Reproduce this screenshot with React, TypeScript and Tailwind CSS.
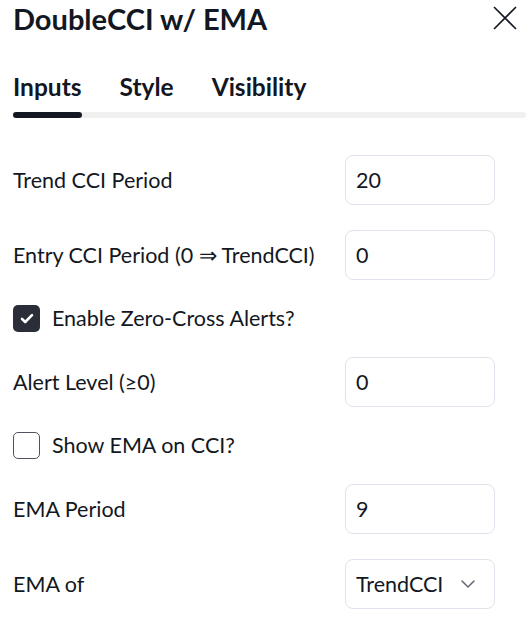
import { ChevronDown } from "lucide-react";

const font = { fontFamily: "Lato, 'Liberation Sans', sans-serif" };

const NumberRow = ({ label, value }: { label: string; value: string }) => (
  <div className="flex items-center justify-between h-[50px]">
    <span className="text-[21.5px]">{label}</span>
    <div className="w-[150px] h-[50px] border border-[#e0e3eb] rounded-[8px] flex items-center px-[10px] text-[21.5px]">
      {value}
    </div>
  </div>
);

const CheckRow = ({ label, checked }: { label: string; checked: boolean }) => (
  <div className="flex items-center h-[27px] gap-[12px]">
    {checked ? (
      <div className="w-[27px] h-[27px] rounded-[5px] bg-[#2a2e39] flex items-center justify-center">
        <svg width="14" height="11" viewBox="0 0 14 11" fill="none">
          <path d="M2 5.8L5.2 9L12 2.2" stroke="white" strokeWidth="2.6" strokeLinecap="round" strokeLinejoin="round" />
        </svg>
      </div>
    ) : (
      <div className="w-[27px] h-[27px] rounded-[5px] border-[1.5px] border-[#50535e]" />
    )}
    <span className="text-[21.5px]">{label}</span>
  </div>
);

export default function App() {
  return (
    <div className="w-[532px] h-[625px] bg-white text-[#131722] overflow-hidden" style={font}>
      <div className="flex items-start justify-between pl-[13px] pr-[15px]">
        <h1 className="text-[29px] font-bold leading-[38px]">DoubleCCI w/ EMA</h1>
        <button className="mt-[6px]">
          <svg width="24" height="24" viewBox="0 0 24 24" fill="none">
            <path d="M1 1L23 23M23 1L1 23" stroke="#131722" strokeWidth="1.6" />
          </svg>
        </button>
      </div>

      <div className="mt-[34px] pl-[13px] pr-[6px]">
        <div className="flex gap-[38px] text-[24.5px] font-bold leading-[30px]">
          <span>Inputs</span>
          <span>Style</span>
          <span>Visibility</span>
        </div>
        <div className="mt-[10px] h-[6px] rounded-full bg-[#f0f0f0]">
          <div className="h-[6px] w-[69px] rounded-full bg-[#131722]" />
        </div>
      </div>

      <div className="mt-[37px] pl-[13px] pr-[37px] flex flex-col gap-[25px]">
        <NumberRow label="Trend CCI Period" value="20" />
        <NumberRow label="Entry CCI Period (0 ⇒ TrendCCI)" value="0" />
        <CheckRow label="Enable Zero-Cross Alerts?" checked />
        <NumberRow label="Alert Level (≥0)" value="0" />
        <CheckRow label="Show EMA on CCI?" checked={false} />
        <NumberRow label="EMA Period" value="9" />
        <div className="flex items-center justify-between h-[50px]">
          <span className="text-[21.5px]">EMA of</span>
          <div className="w-[150px] h-[50px] border border-[#e0e3eb] rounded-[8px] flex items-center justify-between pl-[10px] pr-[14px] text-[21.5px]">
            <span>TrendCCI</span>
            <ChevronDown size={24} strokeWidth={1.6} className="text-[#6a6d78]" />
          </div>
        </div>
      </div>
    </div>
  );
}
